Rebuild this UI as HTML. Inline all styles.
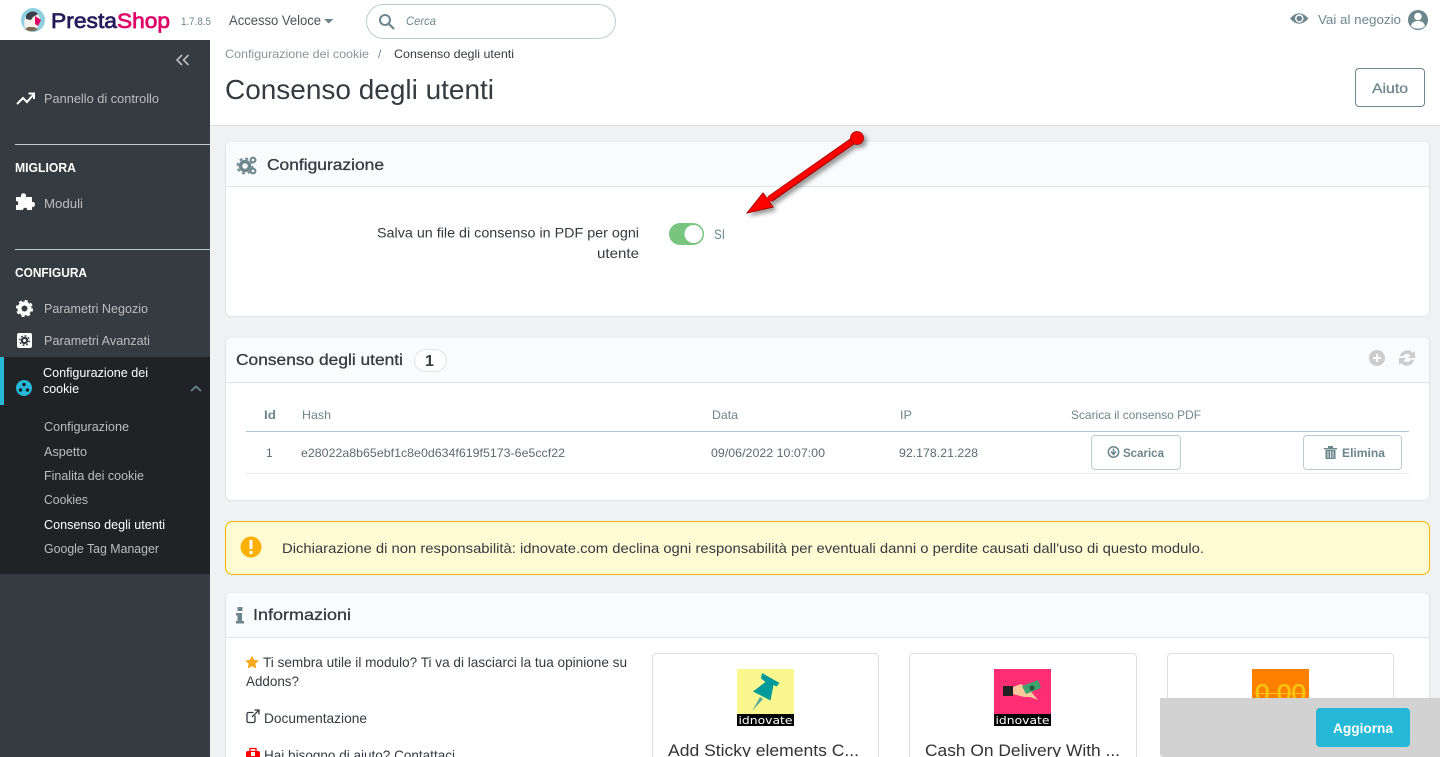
<!DOCTYPE html>
<html lang="it"><head><meta charset="utf-8"><title>Consenso degli utenti</title>
<style>
html,body{margin:0;padding:0;width:1440px;height:757px;overflow:hidden;background:#eff1f2}
svg{display:block}
text{font-family:"Liberation Sans",Arial,sans-serif;font-size:13px;fill:#363a41}
.side{font-size:13px;fill:#bebebe}
.w{fill:#fff}
.h{font-weight:700;font-size:13px;fill:#fff}
.t{font-size:16px;stroke:#363a41;stroke-width:.3}
.g{fill:#6c868e}
.b{font-size:14px}
.prod{font-size:17px;fill:#333}
</style></head><body>
<svg width="1440" height="757" viewBox="0 0 1440 757" xmlns="http://www.w3.org/2000/svg">
<defs><filter id="sh" x="-20%" y="-20%" width="150%" height="150%"><feDropShadow dx="3" dy="3" stdDeviation="2" flood-color="#000" flood-opacity=".4"/></filter></defs>
<rect width="1440" height="757" fill="#eff1f2"/>
<!-- top header -->
<rect width="1440" height="40" fill="#fff"/>
<rect x="210" y="40" width="1230" height="85" fill="#fff"/>
<rect x="210" y="125" width="1230" height="1" fill="#dfdfdf"/>
<!-- logo -->
<circle cx="33" cy="20" r="12" fill="#8fd0de"/>
<path d="M25 28c-2-6 0-15 7-16 5 0 8 4 8 9l-3 8-9 2z" fill="#f4f1ea"/>
<path d="M26 16c2-5 9-6 12-2l-5 3-2 3-5-1z" fill="#3b3f46"/>
<path d="M35 16l6 4-3 6-3-2z" fill="#df0067"/>
<path d="M25 29c3 3 10 3 13 0l-4-2h-6z" fill="#7d6a55"/>
<text x="51" y="28" textLength="66" lengthAdjust="spacingAndGlyphs" style="font-size:21px;fill:#251b5b;stroke:#251b5b;stroke-width:.7">Presta</text>
<text x="117" y="28" textLength="53" lengthAdjust="spacingAndGlyphs" style="font-size:21px;fill:#df0067;stroke:#df0067;stroke-width:.7">Shop</text>
<text x="181" y="25" textLength="30" lengthAdjust="spacingAndGlyphs" style="font-size:11px;fill:#6c868e">1.7.8.5</text>
<text x="229" y="25" textLength="92" lengthAdjust="spacingAndGlyphs" style="font-size:13.5px;fill:#4a5157">Accesso Veloce</text>
<path d="M324 19h9.500l-4.750 4.500z" fill="#6c868e"/>
<rect x="366.500" y="4.500" width="249" height="34" rx="17" fill="#fff" stroke="#bbcdd2"/>
<circle cx="385" cy="20" r="5" fill="none" stroke="#6c868e" stroke-width="2"/>
<path d="M388.500 23.500l5 5" stroke="#6c868e" stroke-width="2.200" stroke-linecap="round"/>
<text x="406" y="25" textLength="30" lengthAdjust="spacingAndGlyphs" style="font-size:12px;font-style:italic;fill:#6c868e">Cerca</text>
<path d="M1290 18.500q9-10.500 18.500 0q-9.500 10.500-18.500 0z" fill="#6c868e"/>
<circle cx="1299.300" cy="18.500" r="4.200" fill="#fff"/><circle cx="1299.300" cy="18.500" r="2.800" fill="#6c868e"/>
<text x="1318" y="24" textLength="83" lengthAdjust="spacingAndGlyphs" class="g">Vai al negozio</text>
<circle cx="1418" cy="20" r="10" fill="#6c868e"/><circle cx="1418" cy="16.500" r="3.800" fill="#fff"/>
<path d="M1411 26c1-4 4-5 7-5s6 1 7 5c-3 3.500-11 3.500-14 0z" fill="#fff"/>
<!-- breadcrumb/title -->
<text x="225" y="58" textLength="144" lengthAdjust="spacingAndGlyphs" style="font-size:12px;fill:#8a9599">Configurazione dei cookie</text>
<text x="378" y="58" style="font-size:12px;fill:#6c868e">/</text>
<text x="394" y="58" textLength="120" lengthAdjust="spacingAndGlyphs" style="font-size:12px">Consenso degli utenti</text>
<text x="225" y="99" textLength="269" lengthAdjust="spacingAndGlyphs" style="font-size:28px">Consenso degli utenti</text>
<rect x="1355.500" y="68.500" width="69" height="38" rx="3.500" fill="#fff" stroke="#6c868e"/>
<text x="1372" y="93" textLength="36" lengthAdjust="spacingAndGlyphs" style="font-size:14px;fill:#6c868e;stroke:#6c868e;stroke-width:.3">Aiuto</text>
<!-- sidebar -->
<rect y="40" width="210" height="717" fill="#363a41"/>
<path d="M182 55l-5 5 5 5M188.500 55l-5 5 5 5" fill="none" stroke="#bebebe" stroke-width="1.600"/>
<path d="M17 104l6-6 4 4 6-7M28.500 93.500h5.500v5.500" fill="none" stroke="#fff" stroke-width="2"/>
<text x="44" y="103" textLength="115" lengthAdjust="spacingAndGlyphs" class="side">Pannello di controllo</text>
<rect x="15" y="144" width="195" height="1" fill="#bbcdd2"/>
<text x="15" y="172" textLength="61" lengthAdjust="spacingAndGlyphs" class="h">MIGLIORA</text>
<path d="M16 199h5c-1-5 6-5 5 0h6v5c4-1 4 6 0 5v3h-5c1-3-4-3-4 0h-7v-5c3 1 3-4 0-4z" fill="#fff" transform="translate(0 -2)"/>
<text x="44" y="208" textLength="39" lengthAdjust="spacingAndGlyphs" class="side">Moduli</text>
<rect x="15" y="249" width="195" height="1" fill="#bbcdd2"/>
<text x="15" y="277" textLength="72" lengthAdjust="spacingAndGlyphs" class="h">CONFIGURA</text>
<circle cx="24.500" cy="308.500" r="5" fill="none" stroke="#fff" stroke-width="4"/>
<circle cx="24.500" cy="308.500" r="7.500" fill="none" stroke="#fff" stroke-width="2.200" stroke-dasharray="3 2.890"/>
<text x="44" y="313" textLength="104" lengthAdjust="spacingAndGlyphs" class="side">Parametri Negozio</text>
<rect x="17" y="333" width="15" height="15" rx="2" fill="#fff"/>
<circle cx="24.500" cy="340.500" r="2.600" fill="#fff" stroke="#363a41" stroke-width="2.200"/>
<circle cx="24.500" cy="340.500" r="4.700" fill="none" stroke="#363a41" stroke-width="1.400" stroke-dasharray="1.850 1.840"/>
<text x="44" y="345" textLength="106" lengthAdjust="spacingAndGlyphs" class="side">Parametri Avanzati</text>
<rect y="357" width="210" height="217" fill="#202226"/>
<rect y="357" width="4" height="48" fill="#25b9d7"/>
<circle cx="24" cy="388" r="8" fill="#25b9d7"/>
<circle cx="24" cy="384.500" r="1.800" fill="#202226"/><circle cx="20.500" cy="390" r="1.800" fill="#202226"/><circle cx="27.500" cy="390" r="1.800" fill="#202226"/>
<text x="43" y="377" textLength="105" lengthAdjust="spacingAndGlyphs" class="w">Configurazione dei</text>
<text x="43" y="393" textLength="36" lengthAdjust="spacingAndGlyphs" class="w">cookie</text>
<path d="M191 391l5-4.500 5 4.500" fill="none" stroke="#6c868e" stroke-width="1.800"/>
<text x="44" y="431" textLength="85" lengthAdjust="spacingAndGlyphs" class="side">Configurazione</text>
<text x="44" y="456" textLength="43" lengthAdjust="spacingAndGlyphs" class="side">Aspetto</text>
<text x="44" y="480" textLength="100" lengthAdjust="spacingAndGlyphs" class="side">Finalita dei cookie</text>
<text x="44" y="504" textLength="44" lengthAdjust="spacingAndGlyphs" class="side">Cookies</text>
<text x="44" y="529" textLength="121" lengthAdjust="spacingAndGlyphs" class="w">Consenso degli utenti</text>
<text x="44" y="553" textLength="115" lengthAdjust="spacingAndGlyphs" class="side">Google Tag Manager</text>
<!-- card 1 -->
<rect x="225.500" y="141.500" width="1204" height="175" rx="5" fill="#fff" stroke="#dbe6e9"/>
<path d="M226 186v-40a4.500 4.500 0 0 1 4.500-4.500h1194a4.500 4.500 0 0 1 4.500 4.500v40z" fill="#fafbfc"/>
<rect x="226" y="186" width="1203" height="1" fill="#dbe6e9"/>
<circle cx="245" cy="166" r="4.500" fill="none" stroke="#6c868e" stroke-width="3.500"/>
<circle cx="245" cy="166" r="7.500" fill="none" stroke="#6c868e" stroke-width="2" stroke-dasharray="2.950 2.950"/>
<circle cx="253" cy="160" r="2.400" fill="none" stroke="#6c868e" stroke-width="2"/>
<circle cx="253" cy="171" r="2.400" fill="none" stroke="#6c868e" stroke-width="2"/>
<text x="267" y="170" textLength="117" lengthAdjust="spacingAndGlyphs" class="t">Configurazione</text>
<text x="377" y="237.500" textLength="262" lengthAdjust="spacingAndGlyphs" class="b">Salva un file di consenso in PDF per ogni</text>
<text x="597" y="258" textLength="42" lengthAdjust="spacingAndGlyphs" class="b">utente</text>
<rect x="669" y="223" width="35" height="22" rx="11" fill="#78c57f"/>
<circle cx="693.500" cy="234" r="9" fill="#fff"/>
<text x="714" y="239" textLength="11" lengthAdjust="spacingAndGlyphs" class="g" style="font-size:14px">SI</text>
<g filter="url(#sh)">
<path d="M857 138L770 199" stroke="#a80000" stroke-width="7"/>
<path d="M747 213l16-20 10 14z" fill="#f00" stroke="#a80000" stroke-width="1"/>
<path d="M857 138L768 200" stroke="#f00" stroke-width="5"/>
<circle cx="857" cy="138" r="6.500" fill="#f00" stroke="#a80000" stroke-width=".8"/>
</g>
<!-- card 2 -->
<rect x="225.500" y="337.500" width="1204" height="163" rx="5" fill="#fff" stroke="#dbe6e9"/>
<path d="M226 382v-40a4.500 4.500 0 0 1 4.500-4.500h1194a4.500 4.500 0 0 1 4.500 4.500v40z" fill="#fafbfc"/>
<rect x="226" y="382" width="1203" height="1" fill="#dbe6e9"/>
<text x="236" y="365" textLength="167" lengthAdjust="spacingAndGlyphs" class="t">Consenso degli utenti</text>
<rect x="414.500" y="349.500" width="32" height="22" rx="11" fill="#fff" stroke="#dbe6e9"/>
<text x="425" y="366" style="font-size:16px;font-weight:700">1</text>
<circle cx="1377" cy="358" r="8" fill="#ccc"/><path d="M1373 358h8M1377 354v8" stroke="#fafbfc" stroke-width="2"/>
<path d="M1400 356a7.500 7.500 0 0 1 13-3l2-2v7h-7l2.500-2.500a4.500 4.500 0 0 0-7.500 1zM1414 360a7.500 7.500 0 0 1-13 3l-2 2v-7h7l-2.500 2.500a4.500 4.500 0 0 0 7.500-1z" fill="#ccc"/>
<text x="264" y="419" textLength="12" lengthAdjust="spacingAndGlyphs" style="font-size:12px;font-weight:700;fill:#6c868e">Id</text>
<text x="302" y="419" textLength="29" lengthAdjust="spacingAndGlyphs" style="font-size:12px;fill:#6c868e">Hash</text>
<text x="712" y="419" textLength="26" lengthAdjust="spacingAndGlyphs" style="font-size:12px;fill:#6c868e">Data</text>
<text x="900" y="419" textLength="12" lengthAdjust="spacingAndGlyphs" style="font-size:12px;fill:#6c868e">IP</text>
<text x="1071" y="419" textLength="130" lengthAdjust="spacingAndGlyphs" style="font-size:12px;fill:#6c868e">Scarica il consenso PDF</text>
<rect x="246" y="431" width="1163" height="1" fill="#a8c5d6"/>
<rect x="246" y="473" width="1163" height="1" fill="#e8eeef"/>
<text x="266" y="457" style="font-size:12px;fill:#5b6b70">1</text>
<text x="301" y="457" textLength="264" lengthAdjust="spacingAndGlyphs" style="font-size:12px;fill:#5b6b70">e28022a8b65ebf1c8e0d634f619f5173-6e5ccf22</text>
<text x="711" y="457" textLength="114" lengthAdjust="spacingAndGlyphs" style="font-size:12px;fill:#5b6b70">09/06/2022 10:07:00</text>
<text x="899" y="457" textLength="79" lengthAdjust="spacingAndGlyphs" style="font-size:12px;fill:#5b6b70">92.178.21.228</text>
<rect x="1091.500" y="435.500" width="89" height="34" rx="3.500" fill="#fff" stroke="#bbcdd2"/>
<circle cx="1113.500" cy="452" r="5.200" fill="none" stroke="#6c868e" stroke-width="1.500"/>
<path d="M1113.500 448.500v5M1111 451.500l2.500 3 2.500-3" fill="none" stroke="#6c868e" stroke-width="1.500"/>
<text x="1123" y="457" textLength="41" lengthAdjust="spacingAndGlyphs" style="font-size:12px;fill:#6c868e;font-weight:700">Scarica</text>
<rect x="1303.500" y="435.500" width="98" height="34" rx="3.500" fill="#fff" stroke="#bbcdd2"/>
<path d="M1324 448h13v1.500h-13zM1328 446h5v2h-5zM1325.500 450h10v9h-10z" fill="#6c868e"/>
<path d="M1328 451v7M1330.500 451v7M1333 451v7" stroke="#fff" stroke-width=".8"/>
<text x="1342" y="457" textLength="43" lengthAdjust="spacingAndGlyphs" style="font-size:12px;fill:#6c868e;font-weight:700">Elimina</text>
<!-- alert -->
<rect x="225.500" y="521.500" width="1204" height="53" rx="7" fill="#fffbd3" stroke="#f4b400"/>
<circle cx="251" cy="547" r="10.500" fill="#fab000"/>
<rect x="249.500" y="540" width="3" height="9" fill="#fff"/><rect x="249.500" y="551" width="3" height="3" fill="#fff"/>
<text x="282" y="553" textLength="922" lengthAdjust="spacingAndGlyphs" class="b">Dichiarazione di non responsabilità: idnovate.com declina ogni responsabilità per eventuali danni o perdite causati dall'uso di questo modulo.</text>
<!-- card 3 -->
<rect x="225.500" y="592.500" width="1204" height="180" rx="5" fill="#fff" stroke="#dbe6e9"/>
<path d="M226 637v-40a4.500 4.500 0 0 1 4.500-4.500h1194a4.500 4.500 0 0 1 4.500 4.500v40z" fill="#fafbfc"/>
<rect x="226" y="637" width="1203" height="1" fill="#dbe6e9"/>
<path d="M237.500 607h5v4h-5zM236 613h6v8h2v2.500h-8V621h1.500v-5.500H236z" fill="#6c868e"/>
<text x="253" y="620" textLength="98" lengthAdjust="spacingAndGlyphs" class="t">Informazioni</text>
<path d="M252 655.500l2.100 4.400 4.800.6-3.500 3.300.9 4.700-4.300-2.300-4.300 2.300.9-4.700-3.500-3.300 4.800-.6z" fill="#f5a81c"/>
<text x="263" y="667" textLength="364" lengthAdjust="spacingAndGlyphs" class="b">Ti sembra utile il modulo? Ti va di lasciarci la tua opinione su</text>
<text x="246" y="686" textLength="53" lengthAdjust="spacingAndGlyphs" class="b">Addons?</text>
<path d="M255 715.500v5.500a1.500 1.500 0 0 1-1.500 1.500h-5a1.500 1.500 0 0 1-1.500-1.500v-7a1.500 1.500 0 0 1 1.500-1.500h5M252 717l7-7M254.500 710h4.500v4.500" fill="none" stroke="#363a41" stroke-width="1.300"/>
<text x="264" y="723" textLength="103" lengthAdjust="spacingAndGlyphs" class="b">Documentazione</text>
<rect x="246" y="751" width="14" height="10" rx="2" fill="#f00"/><rect x="250" y="748.500" width="6" height="3" fill="none" stroke="#f00" stroke-width="1.300"/><rect x="251" y="752" width="4" height="4" fill="#fff"/>
<text x="264" y="760" textLength="191" lengthAdjust="spacingAndGlyphs" class="b">Hai bisogno di aiuto? Contattaci</text>
<!-- product cards -->
<rect x="652.500" y="653.500" width="226" height="120" rx="3.500" fill="#fff" stroke="#dfdfdf"/>
<rect x="909.500" y="653.500" width="227" height="120" rx="3.500" fill="#fff" stroke="#dfdfdf"/>
<rect x="1167.500" y="653.500" width="226" height="120" rx="3.500" fill="#fff" stroke="#dfdfdf"/>
<rect x="737" y="669" width="57" height="57" fill="#fbf78f"/>
<path d="M762 673l17.500 10-3 3.500-3-1.500-3 15.500-17.500-9 12.500-9.500-4.500-3.500z" fill="#009a9a"/>
<path d="M760 697l3 2-11 12z" fill="#5aa89a"/>
<rect x="737" y="714" width="57" height="12" fill="#000"/>
<text x="738.500" y="724" textLength="54" lengthAdjust="spacingAndGlyphs" style="font-size:11px;font-family:'DejaVu Sans',sans-serif;fill:#fff">idnovate</text>
<rect x="994" y="669" width="57" height="57" fill="#ff2d74"/>
<rect x="1003" y="686" width="10" height="10" fill="#222"/>
<path d="M1013 687l8-3 8 5 4 5 5 6-8-3-6 0-11-3z" fill="#fcc79a"/>
<path d="M1022 686l16-6 3 8-15 6z" fill="#3da36f"/><circle cx="1032" cy="688" r="2.500" fill="#1d5a3d"/>
<rect x="994" y="714" width="57" height="12" fill="#000"/>
<text x="995.500" y="724" textLength="54" lengthAdjust="spacingAndGlyphs" style="font-size:11px;font-family:'DejaVu Sans',sans-serif;fill:#fff">idnovate</text>
<rect x="1252" y="669" width="57" height="57" fill="#ff7f00"/>
<text x="1255" y="701" textLength="51" lengthAdjust="spacingAndGlyphs" style="font-size:24px;fill:#f7c510;stroke:#f7c510;stroke-width:.5">0,00</text>
<rect x="1255" y="693" width="51" height="1" fill="#f7c510"/>
<text x="668" y="756" textLength="191" lengthAdjust="spacingAndGlyphs" class="prod">Add Sticky elements C...</text>
<text x="925" y="756" textLength="195" lengthAdjust="spacingAndGlyphs" class="prod">Cash On Delivery With ...</text>
<!-- footer -->
<path d="M1160 698h280v59h-277a3 3 0 0 1-3-3z" fill="#d2d2d2"/>
<rect x="1316" y="708" width="94" height="39" rx="4" fill="#25b9d7"/>
<text x="1333" y="733" textLength="60" lengthAdjust="spacingAndGlyphs" style="font-size:14px;font-weight:700;fill:#fff">Aggiorna</text>
</svg>
</body></html>
